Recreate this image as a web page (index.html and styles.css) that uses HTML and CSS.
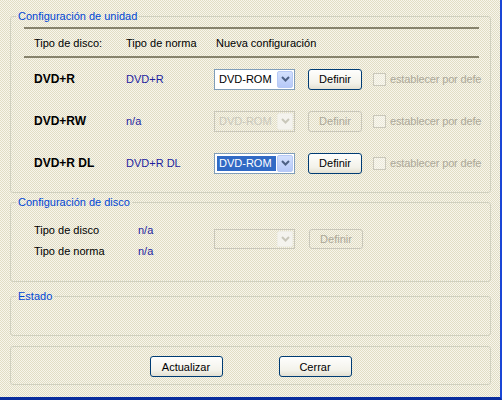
FILE: index.html
```html
<!DOCTYPE html>
<html lang="es">
<head>
<meta charset="utf-8">
<title>Configuración de unidad</title>
<link rel="stylesheet" href="styles.css">
</head>
<body>
<div class="window">
  <fieldset class="group g-unit">
    <legend>Configuración de unidad</legend>
    <div class="table">
      <div class="thead">
        <span>Tipo de disco:</span>
        <span>Tipo de norma</span>
        <span class="h3">Nueva configuración</span>
      </div>
      <div class="row">
        <span class="disc">DVD+R</span>
        <span class="norm">DVD+R</span>
        <div class="combo"><span class="val">DVD-ROM</span><span class="arrow"><svg width="9" height="6" viewBox="0 0 9 6"><path d="M1 1 L4.5 4.5 L8 1" fill="none" stroke="#4d6185" stroke-width="2"/></svg></span></div>
        <button class="btn">Definir</button>
        <label class="chk"><span class="box"></span><span class="chk-text">establecer por defe</span></label>
      </div>
      <div class="row">
        <span class="disc">DVD+RW</span>
        <span class="norm">n/a</span>
        <div class="combo disabled"><span class="val">DVD-ROM</span><span class="arrow"><svg width="9" height="6" viewBox="0 0 9 6"><path d="M1 1 L4.5 4.5 L8 1" fill="none" stroke="#c9c7ba" stroke-width="2"/></svg></span></div>
        <button class="btn disabled">Definir</button>
        <label class="chk"><span class="box"></span><span class="chk-text">establecer por defe</span></label>
      </div>
      <div class="row">
        <span class="disc">DVD+R DL</span>
        <span class="norm">DVD+R DL</span>
        <div class="combo"><span class="val selected">DVD-ROM</span><span class="arrow"><svg width="9" height="6" viewBox="0 0 9 6"><path d="M1 1 L4.5 4.5 L8 1" fill="none" stroke="#4d6185" stroke-width="2"/></svg></span></div>
        <button class="btn">Definir</button>
        <label class="chk"><span class="box"></span><span class="chk-text">establecer por defe</span></label>
      </div>
    </div>
  </fieldset>

  <fieldset class="group g-disc">
    <legend>Configuración de disco</legend>
    <div class="disc-grid">
      <span>Tipo de disco</span>
      <span class="norm">n/a</span>
      <div class="combo disabled span2"><span class="val"></span><span class="arrow"><svg width="9" height="6" viewBox="0 0 9 6"><path d="M1 1 L4.5 4.5 L8 1" fill="none" stroke="#c9c7ba" stroke-width="2"/></svg></span></div>
      <button class="btn disabled span2">Definir</button>
      <span>Tipo de norma</span>
      <span class="norm">n/a</span>
    </div>
  </fieldset>

  <fieldset class="group g-state">
    <legend>Estado</legend>
    <div class="state-body"></div>
  </fieldset>

  <div class="group g-actions">
    <button class="btn wide">Actualizar</button>
    <button class="btn wide">Cerrar</button>
  </div>
</div>
</body>
</html>
```

FILE: styles.css
```css
html, body {
  margin: 0;
  padding: 0;
}

body {
  font-family: "Liberation Sans", Arial, sans-serif;
  font-size: 11px;
  color: #000;
}

.window {
  box-sizing: border-box;
  width: 502px;
  height: 400px;
  padding: 10px 0 0 10px;
  border-right: 2px solid #1a46d6;
  border-bottom: 3px solid #0a2c9c;
  background-color: #ece9d8;
  background-image: repeating-conic-gradient(#f7f5ec 0 25%, #e1ddc4 0 50%);
  background-size: 2px 2px;
}

.group {
  box-sizing: border-box;
  width: 481px;
  margin: 0;
  padding: 0;
  border: 1px solid #d0d0bf;
  border-radius: 3px;
  min-width: 0;
}

.group legend {
  margin-left: 5px;
  padding: 0 2px;
  line-height: 13px;
  height: 13px;
  color: #0046d5;
}

/* group 1 */
.table {
  margin: 4px 11px 8px 13px;
}

.thead,
.row {
  display: grid;
  grid-template-columns: 92px 88px 94px 65px 1fr;
  align-items: center;
  padding-left: 10px;
  white-space: nowrap;
}

.thead {
  height: 27px;
  border-top: 2px solid #86826c;
  border-bottom: 2px solid #86826c;
}

.thead .h3 {
  padding-left: 2px;
  grid-column: span 3;
}

.row {
  height: 42px;
}

.disc {
  font-weight: bold;
  font-size: 12px;
}

.norm {
  color: #1e1ea0;
}

/* combo box */
.combo {
  box-sizing: border-box;
  width: 81px;
  height: 21px;
  border: 1px solid #7f9db9;
  background: #fff;
  display: flex;
  align-items: stretch;
  padding: 1px;
}

.combo .val {
  flex: 1;
  margin: 1px;
  padding-left: 2px;
  line-height: 15px;
  white-space: nowrap;
  overflow: hidden;
}

.combo .val.selected {
  background: #316ac5;
  color: #fff;
}

.combo .arrow {
  width: 16px;
  box-sizing: border-box;
  border: 1px solid #b7c9f5;
  border-radius: 2px;
  background: linear-gradient(#d3e0fd, #b6c9f8);
  display: flex;
  align-items: center;
  justify-content: center;
}

.combo.disabled {
  border-color: #c9c7ba;
  background: transparent;
  color: #c9c7ba;
}

.combo.disabled .arrow {
  border-color: #eeede5;
  background: #f4f3ee;
}

/* buttons */
.btn {
  box-sizing: border-box;
  width: 54px;
  height: 21px;
  margin: 0;
  padding: 0;
  font-family: inherit;
  font-size: 11px;
  color: #000;
  border: 1px solid #003c74;
  border-radius: 3px;
  background: linear-gradient(#fefefd, #f3f2ea 70%, #e3e0d2);
}

.btn.disabled {
  border-color: #c9c7ba;
  color: #aca899;
  background: transparent;
}

.btn.wide {
  width: 73px;
}

/* checkbox */
.chk {
  display: flex;
  align-items: center;
  gap: 4px;
  color: #aca899;
  white-space: nowrap;
  overflow: visible;
}

.chk .box {
  flex: none;
  box-sizing: border-box;
  width: 13px;
  height: 13px;
  border: 1px solid #cac8bb;
  background: rgba(255, 255, 255, 0.35);
}

.chk-text {
  letter-spacing: -0.15px;
}

/* group 2 */
.g-disc {
  margin-top: 3px;
}

.disc-grid {
  display: grid;
  grid-template-columns: 104px 76px 95px 54px;
  grid-template-rows: 21px 21px;
  align-items: center;
  margin: 10px 0 20px 23px;
}

.disc-grid .span2 {
  grid-row: span 2;
  align-self: start;
  margin-top: 10px;
}

.disc-grid .combo {
  width: 81px;
  height: 20px;
}

.disc-grid .btn {
  height: 20px;
}

/* group 3 */
.g-state {
  margin-top: 8px;
}

.state-body {
  height: 32px;
}

/* group 4 */
.g-actions {
  margin-top: 10px;
  padding: 9px 0 7px;
  display: flex;
  justify-content: center;
  gap: 56px;
}
```
